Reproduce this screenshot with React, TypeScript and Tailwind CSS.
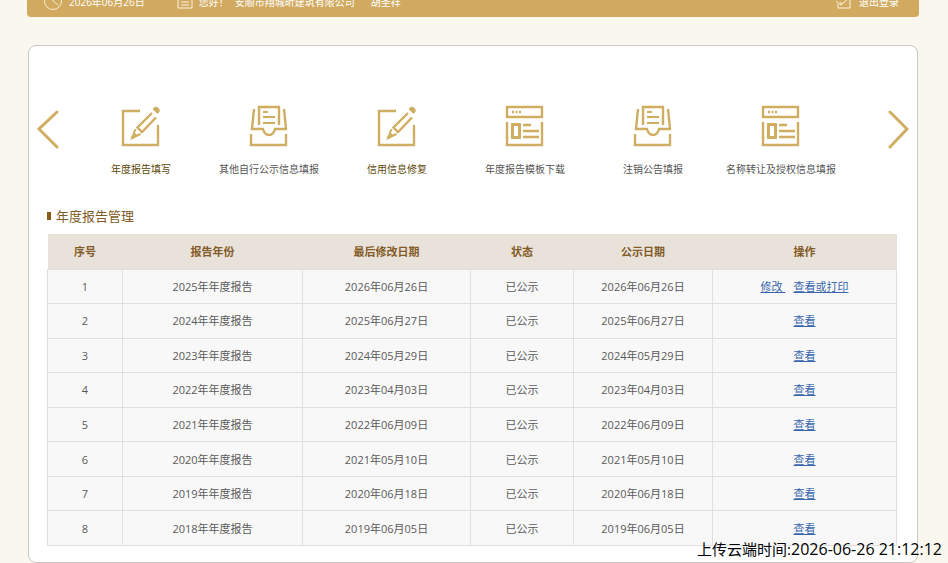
import React from 'react'

const rows = [
  { year: 2025, date: '2026年06月26日' },
  { year: 2024, date: '2025年06月27日' },
  { year: 2023, date: '2024年05月29日' },
  { year: 2022, date: '2023年04月03日' },
  { year: 2021, date: '2022年06月09日' },
  { year: 2020, date: '2021年05月10日' },
  { year: 2019, date: '2020年06月18日' },
  { year: 2018, date: '2019年06月05日' },
]

const EditIcon = () => (
  <svg width="42" height="42" viewBox="0 0 42 42" fill="none" stroke="#cfae62" strokeWidth="2.400" aria-hidden="true">
    <path d="M20 6H3v34h35V20" />
    <path d="M15.500 24L12 33l8.500-4" strokeWidth="2" />
    <path d="M12 33l4-4" strokeWidth="3" />
    <path d="M32 8L17.500 22.500L22 27l14-14.500" />
    <path d="M33 4c1-2 4-2.500 5.500-.5s.5 4-1 5z" fill="#cfae62" strokeWidth="1" />
  </svg>
)

const InboxIcon = () => (
  <svg width="42" height="42" viewBox="0 0 42 42" fill="none" stroke="#cfae62" strokeWidth="2.400" aria-hidden="true">
    <path d="M11 20V2h20v18" />
    <path d="M6 4L4 24h11c1 4 3 6 6 6s5-2 6-6h11L36 4" />
    <path d="M3 29v11h35V29" />
    <path d="M15 7h5M15 12h12M15 18h12" strokeWidth="2" />
  </svg>
)

const TemplateIcon = () => (
  <svg width="42" height="42" viewBox="0 0 42 42" fill="none" stroke="#cfae62" strokeWidth="2.400" aria-hidden="true">
    <path d="M3 2h35v10H3z" />
    <path d="M8 7h2M11.500 7h2M15 7h2" />
    <path d="M3 17v23h35V17" />
    <path d="M8.500 19.500h7v13h-7z" strokeWidth="3" />
    <path d="M19 20h8M19 26h16M19 32h16" />
  </svg>
)

const entries = [
  { label: '年度报告填写', Icon: EditIcon, active: true },
  { label: '其他自行公示信息填报', Icon: InboxIcon },
  { label: '信用信息修复', Icon: EditIcon, active: true },
  { label: '年度报告模板下载', Icon: TemplateIcon },
  { label: '注销公告填报', Icon: InboxIcon },
  { label: '名称转让及授权信息填报', Icon: TemplateIcon },
]

const Arrow: React.FC<{ d: string; label: string }> = ({ d, label }) => (
  <button type="button" aria-label={label} className="mt-1 shrink-0">
    <svg width="22" height="40" viewBox="0 0 22 40" fill="none" stroke="#cfae62" strokeWidth="3" strokeLinecap="round">
      <path d={d} />
    </svg>
  </button>
)

const TopBar = () => (
  <header className="-mt-[13px] ml-[27px] mr-[29px] flex h-[30px] items-center rounded bg-[#d1aa60] pl-4 pr-5 text-[10px] text-white">
    <svg width="20" height="20" viewBox="0 0 20 20" fill="none" stroke="#f8eed8" aria-hidden="true">
      <circle cx="10" cy="9" r="8.500" />
      <path d="M10 3v6l5 4" />
    </svg>
    <time className="ml-1.5" dateTime="2026-06-26">
      2026年06月26日
    </time>
    <svg className="ml-8" width="16" height="16" viewBox="0 0 16 16" fill="none" stroke="#fbf3e0" aria-hidden="true">
      <path d="M1 1h14v13H1z" />
      <path d="M4 5h6M4 8h8M4 11h8" />
    </svg>
    <span className="ml-1.5">您好！</span>
    <span className="ml-1.5">安顺市翔城昕建筑有限公司</span>
    <span className="ml-4">胡圣祥</span>
    <a href="#" className="ml-auto flex items-center gap-2">
      <svg width="16" height="16" viewBox="0 0 16 16" fill="none" stroke="#fbf3e0" aria-hidden="true">
        <path d="M3 10v4h12V4M1 7l5 4 8-7M6 11V8" />
      </svg>
      退出登录
    </a>
  </header>
)

const ReportTable = () => (
  <table className="h-[312px] w-full table-fixed border-collapse text-center text-[11px] leading-4 text-[#5a5a5a]">
    <colgroup>
      <col className="w-[75px]" />
      <col className="w-[180px]" />
      <col className="w-[168px]" />
      <col className="w-[103px]" />
      <col className="w-[139px]" />
      <col className="w-[184px]" />
    </colgroup>
    <thead className="bg-[#e9e2db] text-[#835b26] [&_th]:pt-0.5">
      <tr className="h-[35px]">
        <th>序号</th>
        <th>报告年份</th>
        <th>最后修改日期</th>
        <th>状态</th>
        <th>公示日期</th>
        <th>操作</th>
      </tr>
    </thead>
    <tbody className="bg-[#f8f8f8] [&_td]:border [&_td]:border-[#dfdfdf] [&_td]:pt-px">
      {rows.map((row, index) => (
        <tr key={row.year}>
          <td>{index + 1}</td>
          <td>{row.year}年年度报告</td>
          <td>{row.date}</td>
          <td>已公示</td>
          <td>{row.date}</td>
          <td className="text-[#3765ae]">
            {index === 0 ? (
              <>
                <a href="#" className="mr-2 whitespace-pre underline">
                  {'修改 '}
                </a>
                <a href="#" className="underline">
                  查看或打印
                </a>
              </>
            ) : (
              <a href="#" className="underline">
                查看
              </a>
            )}
          </td>
        </tr>
      ))}
    </tbody>
  </table>
)

export default function App() {
  return (
    <div className="relative flow-root min-h-screen bg-[#faf7ee] font-['Open_Sans','Noto_Sans_CJK_SC',sans-serif]">
      <TopBar />
      <main className="ml-7 mr-[30px] mt-7 rounded-lg border border-[#c9c8c3] bg-white pb-4">
        <nav className="flex items-start px-2 pt-[59px]">
          <Arrow d="M20 3L2 20l18 18" label="上一页" />
          <ul className="ml-[18px] mr-[42px] grid flex-1 grid-cols-6">
            {entries.map(({ label, Icon, active }) => (
              <li key={label}>
                <a
                  href="#"
                  className={`flex flex-col items-center gap-3.5 whitespace-nowrap text-[10px] leading-4 ${
                    active ? 'text-[#5c4708]' : 'text-[#555]'
                  }`}
                >
                  <Icon />
                  {label}
                </a>
              </li>
            ))}
          </ul>
          <Arrow d="M3 3l17 17L3 38" label="下一页" />
        </nav>
        <section className="ml-[18px] mr-5 mt-[29px]">
          <h2 className="mb-2 flex items-center gap-[5px] text-[13px] leading-5 text-[#835b26]">
            <span className="h-2 w-1 bg-[#8a5a14]" />
            年度报告管理
          </h2>
          <ReportTable />
        </section>
      </main>
      <p className="absolute bottom-1 right-1.5 text-[15px] leading-5 text-black">
        上传云端时间:<time className="text-[16px]">2026-06-26 21:12:12</time>
      </p>
    </div>
  )
}
